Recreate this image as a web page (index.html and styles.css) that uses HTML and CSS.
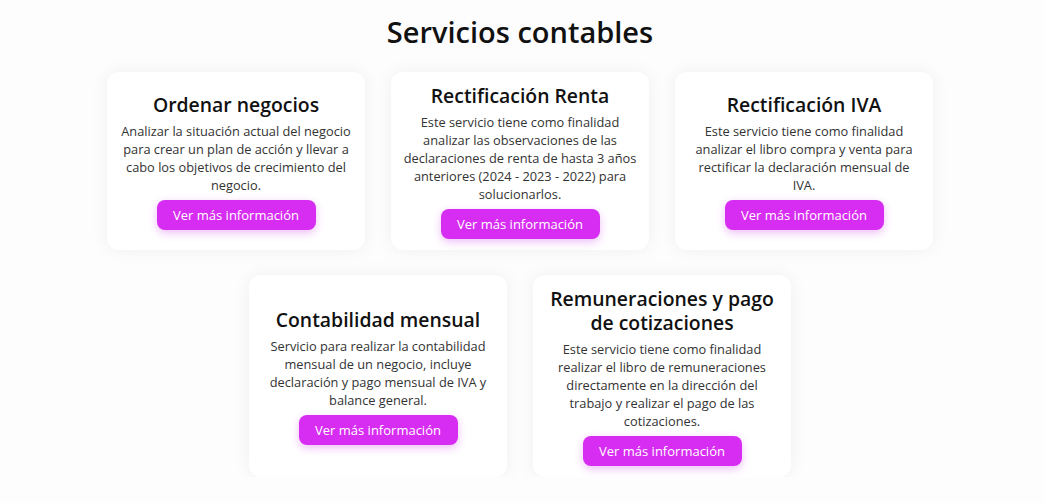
FILE: index.html
```html
<!DOCTYPE html>
<html lang="es">
<head>
<meta charset="utf-8">
<title>Servicios contables</title>
<link rel="stylesheet" href="styles.css">
</head>
<body>
<section class="services">
  <h1 class="services-title">Servicios contables</h1>
  <div class="cards">
    <article class="card">
      <h2 class="card-title">Ordenar negocios</h2>
      <p class="card-text">Analizar la situación actual del negocio para crear un plan de acción y llevar a cabo los objetivos de crecimiento del negocio.</p>
      <a class="card-btn" href="#">Ver más información</a>
    </article>
    <article class="card">
      <h2 class="card-title">Rectificación Renta</h2>
      <p class="card-text">Este servicio tiene como finalidad analizar las observaciones de las declaraciones de renta de hasta 3 años anteriores (2024 - 2023 - 2022) para solucionarlos.</p>
      <a class="card-btn" href="#">Ver más información</a>
    </article>
    <article class="card">
      <h2 class="card-title">Rectificación IVA</h2>
      <p class="card-text">Este servicio tiene como finalidad analizar el libro compra y venta para rectificar la declaración mensual de IVA.</p>
      <a class="card-btn" href="#">Ver más información</a>
    </article>
    <article class="card">
      <h2 class="card-title">Contabilidad mensual</h2>
      <p class="card-text">Servicio para realizar la contabilidad mensual de un negocio, incluye declaración y pago mensual de IVA y balance general.</p>
      <a class="card-btn" href="#">Ver más información</a>
    </article>
    <article class="card">
      <h2 class="card-title">Remuneraciones y pago de cotizaciones</h2>
      <p class="card-text">Este servicio tiene como finalidad realizar el libro de remuneraciones directamente en la dirección del trabajo y realizar el pago de las cotizaciones.</p>
      <a class="card-btn" href="#">Ver más información</a>
    </article>
  </div>
</section>
</body>
</html>
```
FILE: styles.css
```css
* { box-sizing: border-box; }
html, body { margin: 0; padding: 0; }
body {
  background: #fdfdfd;
  font-family: "Open Sans", "DejaVu Sans", sans-serif;
  color: #333;
}
.services {
  display: flex;
  flex-direction: column;
  align-items: center;
  padding: 13px 4px 0 0;
}
.services-title {
  margin: 0 0 21px;
  font-size: 29px;
  line-height: 38px;
  font-weight: 600;
  color: #111;
}
.cards {
  display: flex;
  flex-wrap: wrap;
  justify-content: center;
  gap: 25px 26px;
  width: 830px;
}
.card {
  width: 258px;
  background: #fff;
  border-radius: 12px;
  box-shadow: 0 0 18px rgba(0, 0, 0, 0.06);
  padding: 11.5px 12px;
  display: flex;
  flex-direction: column;
  align-items: center;
  justify-content: center;
  text-align: center;
}
.card-title {
  margin: 0;
  font-size: 19.4px;
  line-height: 24px;
  font-weight: 600;
  color: #111;
}
.card-text {
  margin: 5px 0 6px;
  font-size: 12.8px;
  line-height: 18px;
  color: #333;
}
.card-btn {
  display: inline-block;
  width: 159px;
  height: 30px;
  line-height: 30px;
  border-radius: 8px;
  background: #d72cf2;
  color: #fff;
  font-size: 13px;
  text-decoration: none;
  box-shadow: 0 3px 8px rgba(200, 40, 230, 0.3);
}
```
